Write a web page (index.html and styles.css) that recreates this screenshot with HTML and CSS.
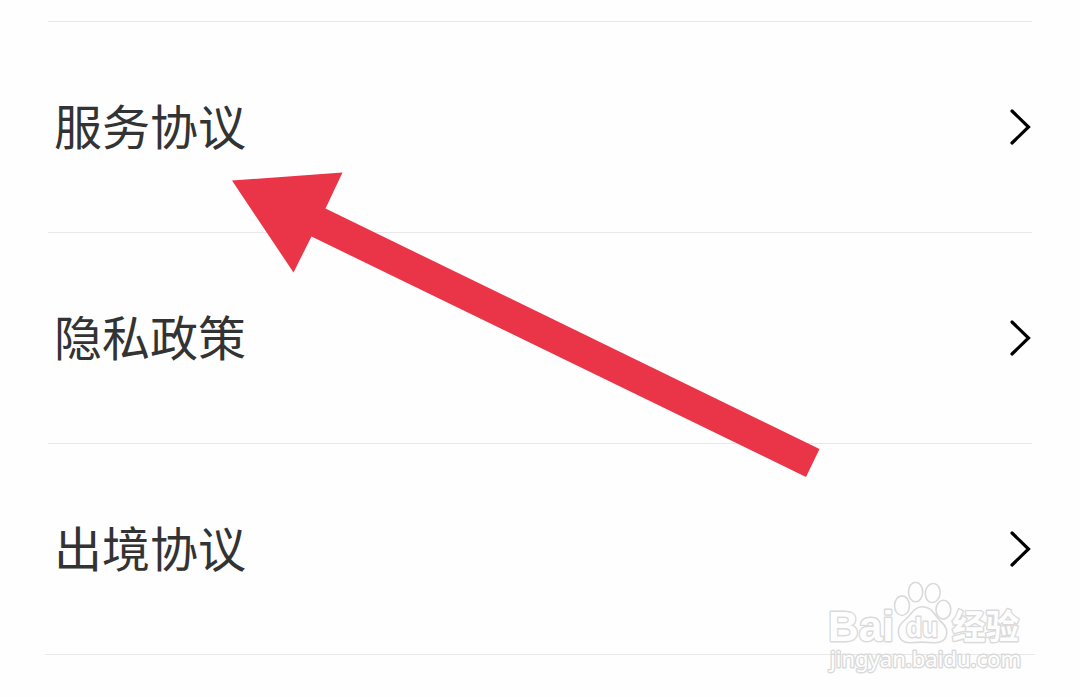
FILE: index.html
```html
<!DOCTYPE html>
<html lang="zh-CN">
<head>
  <meta charset="UTF-8">
  <meta name="viewport" content="width=device-width, initial-scale=1.0">
  <title>服务协议</title>
  <link rel="stylesheet" href="styles.css">
</head>
<body>
  <ul class="menu">
    <li class="menu-item">
      <span class="label">服务协议</span>
      <svg class="chevron" viewBox="0 0 24 38"><path d="M4 3 L20.5 19 L4 35"/></svg>
    </li>
    <li class="menu-item">
      <span class="label">隐私政策</span>
      <svg class="chevron" viewBox="0 0 24 38"><path d="M4 3 L20.5 19 L4 35"/></svg>
    </li>
    <li class="menu-item">
      <span class="label">出境协议</span>
      <svg class="chevron" viewBox="0 0 24 38"><path d="M4 3 L20.5 19 L4 35"/></svg>
    </li>
  </ul>
  <div class="menu-end"></div>

  <!-- Red pointer arrow -->
  <svg class="arrow" viewBox="0 0 600 310">
    <path d="M2 10.5 L112.5 2.5 L95.5 38.5 L589.5 279 L576 307 L81.5 66.5 L63.5 102.5 Z"/>
  </svg>

  <!-- Watermark logo -->
  <svg class="watermark" viewBox="0 0 215 115">
    <g class="outline">
      <ellipse cx="82" cy="35.7" rx="7.5" ry="9.8"/>
      <ellipse cx="95.6" cy="22" rx="7.1" ry="9.8"/>
      <ellipse cx="112.7" cy="23" rx="7.4" ry="9.6" transform="rotate(8 112.7 23)"/>
      <ellipse cx="123.4" cy="39.7" rx="7.4" ry="9.4"/>
      <path d="M102.5 36.7 C94 36.7 92 44 86 49 C80 54 78 57 78.4 62.5 C79 70 84 73.3 91 72.7 C98 72 106 72 113 72.7 C121 73.5 126.5 70 126.8 62.5 C127 56 122 53 118 48.5 C113 42 110 36.7 102.5 36.7 Z"/>
      <text class="brand" x="8" y="70.5" textLength="66" lengthAdjust="spacingAndGlyphs">Bai</text>
      <text class="du" x="86" y="66.5" textLength="32" lengthAdjust="spacingAndGlyphs">du</text>
      <text class="brand-cn" x="132" y="69" textLength="67" lengthAdjust="spacingAndGlyphs">经验</text>
      <text class="site" x="10" y="97" textLength="191" lengthAdjust="spacingAndGlyphs">jingyan.baidu.com</text>
    </g>
  </svg>
</body>
</html>
```
FILE: styles.css
```css
body {
  margin: 0;
  height: 697px;
  position: relative;
  overflow: hidden;
  background: #fefefe;
  font-family: "Noto Sans CJK SC", sans-serif;
  color: #333;
}

/* List of agreements */
.menu {
  list-style: none;
  margin: 0;
  padding: 21px 48px 0;
}

.menu-item {
  display: flex;
  justify-content: space-between;
  align-items: center;
  box-sizing: border-box;
  height: 211px;
  padding: 0 0 1px 6px;
  border-top: 1px solid #e8e8e8;
}

.label {
  font-size: 48px;
  line-height: 70px;
  font-weight: 400;
  padding-bottom: 6px;
}

.chevron {
  width: 24px;
  height: 38px;
}

.chevron path {
  fill: none;
  stroke: #000;
  stroke-width: 3.2;
  stroke-linecap: round;
}

.menu-end {
  margin: 0 45px;
  border-top: 1px solid #e8e8e8;
}

/* Arrow drawn over the list */
.arrow {
  position: absolute;
  left: 230px;
  top: 170px;
  width: 600px;
  height: 310px;
}

.arrow path {
  fill: #ea3548;
}

/* Watermark in the bottom corner */
.watermark {
  position: absolute;
  left: 820px;
  top: 570px;
  width: 215px;
  height: 115px;
}

.outline {
  fill: #fefefe;
  stroke: #dadada;
  stroke-width: 1.6;
  stroke-linejoin: round;
}

.outline text {
  stroke-width: 2.8;
  paint-order: stroke;
}

.brand {
  font: bold 43px "Liberation Sans", sans-serif;
}

.du {
  font: bold 28px "Liberation Sans", sans-serif;
}

.brand-cn {
  font: bold 34px "Noto Sans CJK SC", sans-serif;
}

.site {
  font: 22px "Noto Sans", sans-serif;
}
```
